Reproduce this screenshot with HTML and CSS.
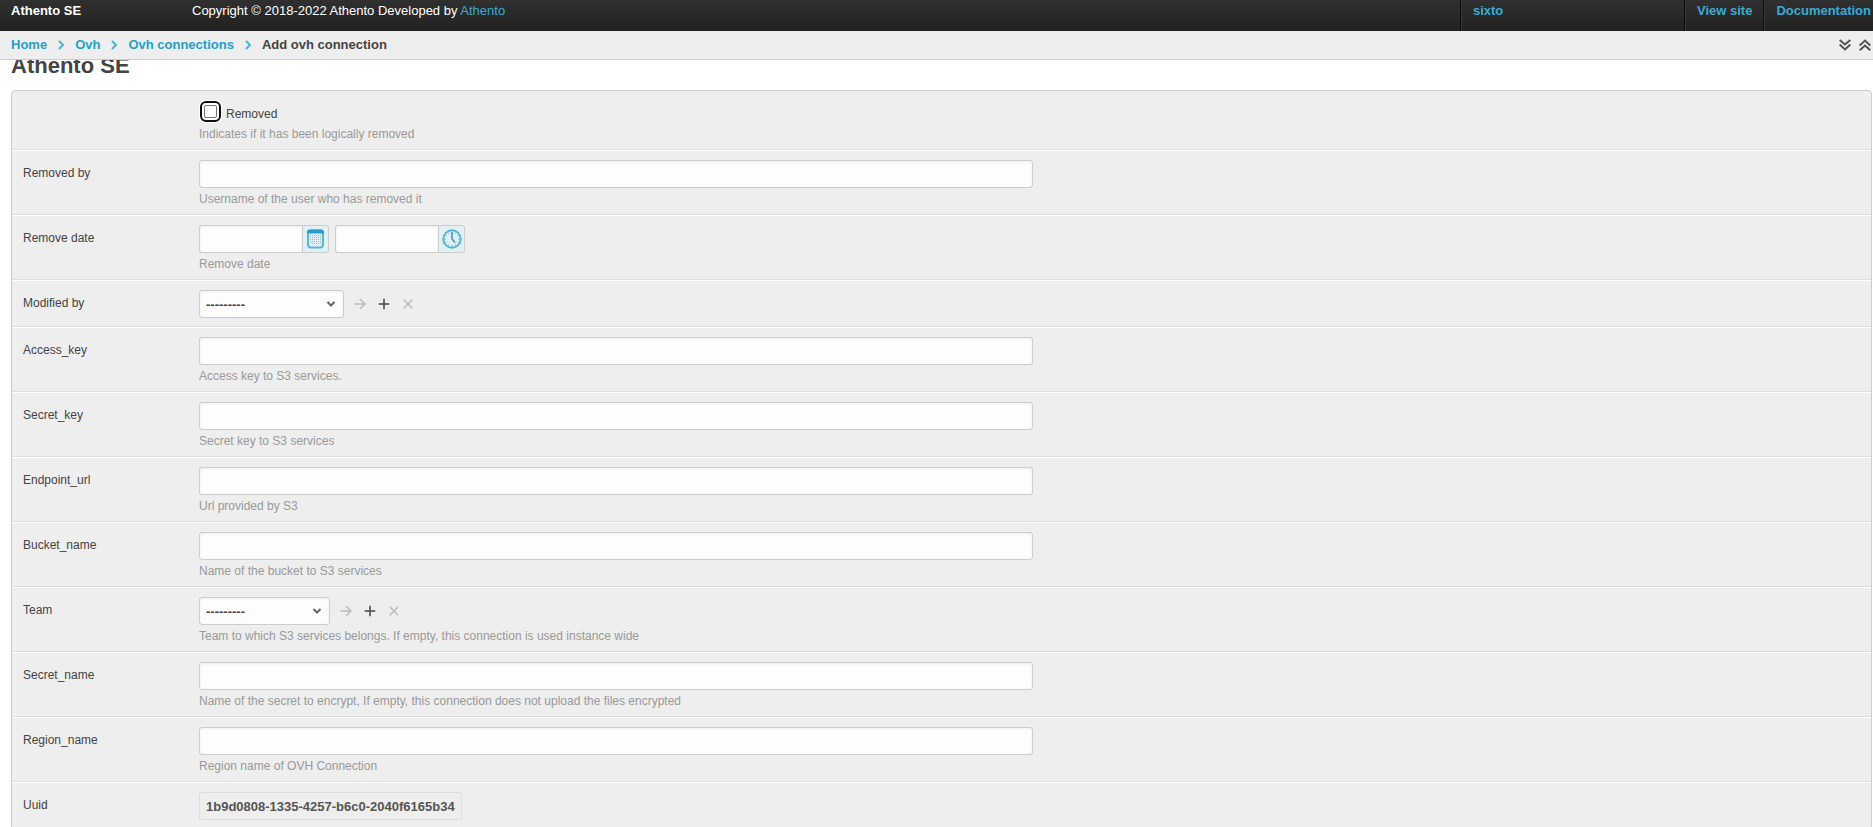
FILE: index.html
```html
<!DOCTYPE html>
<html lang="en">
<head>
<meta charset="utf-8">
<title>Add ovh connection | Athento SE</title>
<link rel="stylesheet" href="styles.css">
</head>
<body>

<header id="grp-header">
	<div class="navigation">
		<h1 class="branding">Athento SE</h1>
		<p class="copyright">Copyright © 2018-2022 Athento Developed by <a href="#">Athento</a></p>
		<ul class="user-tools">
			<li class="user"><a href="#">sixto</a></li>
			<li><a href="#">View site</a></li>
			<li><a href="#">Documentation</a></li>
		</ul>
	</div>
	<div class="context">
		<ul class="breadcrumbs">
			<li><a href="#">Home</a><svg class="sep" viewBox="0 0 8 12"><path d="M2 2l4 4-4 4"/></svg></li>
			<li><a href="#">Ovh</a><svg class="sep" viewBox="0 0 8 12"><path d="M2 2l4 4-4 4"/></svg></li>
			<li><a href="#">Ovh connections</a><svg class="sep" viewBox="0 0 8 12"><path d="M2 2l4 4-4 4"/></svg></li>
			<li>Add ovh connection</li>
		</ul>
		<div class="page-tools">
			<button type="button" aria-label="Open all"><svg viewBox="0 0 12 12"><path d="M.7 1 6 5.500 11.300 1M.7 5.500 6 10.500 11.300 5.500"/></svg></button>
			<button type="button" aria-label="Close all"><svg viewBox="0 0 12 12"><path d="M.7 6.500 6 1.500 11.300 6.500M.7 11.300 6 6.500 11.300 11.300"/></svg></button>
		</div>
	</div>
</header>

<main class="content">
	<h1 class="title">Athento SE</h1>
	<form class="module">

		<div class="row">
			<div class="field check-field">
				<div class="check"><input type="checkbox" id="id_removed"><label for="id_removed">Removed</label></div>
				<p class="help">Indicates if it has been logically removed</p>
			</div>
		</div>

		<div class="row">
			<label for="id_removed_by">Removed by</label>
			<div class="field">
				<input type="text" class="text" id="id_removed_by">
				<p class="help">Username of the user who has removed it</p>
			</div>
		</div>

		<div class="row">
			<label for="id_remove_date">Remove date</label>
			<div class="field">
				<div class="datetime">
					<div class="picker">
						<input type="text" class="text" id="id_remove_date">
						<button type="button" aria-label="Calendar">
							<svg viewBox="0 0 20 20">
								<rect class="face" x="2" y="1.500" width="15" height="17" rx="3"/>
								<path class="bar" d="M1 4.500V3.500A3 3 0 0 1 4 .5h11a3 3 0 0 1 3 3v1z"/>
								<path class="dots" d="M4 6.500h11M4 8.500h11M4 10.500h11M4 12.500h11M4 14.500h11"/>
							</svg>
						</button>
					</div>
					<div class="picker">
						<input type="text" class="text" id="id_remove_time" aria-label="Remove time">
						<button type="button" aria-label="Clock">
							<svg viewBox="0 0 20 20">
								<circle class="face" cx="10" cy="10" r="8.700"/>
								<path class="ticks" d="M10 2.500v1.500M10 16v1.500M2.500 10H4M16 10h1.500M6.200 3.500l.7 1.200M13.800 3.500l-.7 1.200M3.500 6.200l1.200.7M16.500 6.200l-1.200.7M3.500 13.800l1.200-.7M16.500 13.800l-1.200-.7M6.200 16.500l.7-1.200M13.800 16.500l-.7-1.200"/>
								<path class="hands" d="M10 3V10l3 3.500"/>
							</svg>
						</button>
					</div>
				</div>
				<p class="help">Remove date</p>
			</div>
		</div>

		<div class="row">
			<label for="id_modified_by">Modified by</label>
			<div class="field">
				<div class="related">
					<div class="select wide">
						<select id="id_modified_by"><option>---------</option></select>
						<svg viewBox="0 0 10 8"><path d="M1.500 2 5 5.500 8.500 2"/></svg>
					</div>
					<div class="related-tools">
						<button type="button" class="off" aria-label="Change"><svg viewBox="0 0 12 12"><path d="M.5 6H11M6 1l5 5-5 5"/></svg></button>
						<button type="button" class="add" aria-label="Add"><svg viewBox="0 0 12 12"><path d="M6 .7v10.600M.7 6h10.600"/></svg></button>
						<button type="button" class="off" aria-label="Remove"><svg viewBox="0 0 12 12"><path d="M1.800 1.800l8.400 8.400M10.200 1.800l-8.400 8.400"/></svg></button>
					</div>
				</div>
			</div>
		</div>

		<div class="row">
			<label for="id_access_key">Access_key</label>
			<div class="field">
				<input type="text" class="text" id="id_access_key">
				<p class="help">Access key to S3 services.</p>
			</div>
		</div>

		<div class="row">
			<label for="id_secret_key">Secret_key</label>
			<div class="field">
				<input type="text" class="text" id="id_secret_key">
				<p class="help">Secret key to S3 services</p>
			</div>
		</div>

		<div class="row">
			<label for="id_endpoint_url">Endpoint_url</label>
			<div class="field">
				<input type="text" class="text" id="id_endpoint_url">
				<p class="help">Url provided by S3</p>
			</div>
		</div>

		<div class="row">
			<label for="id_bucket_name">Bucket_name</label>
			<div class="field">
				<input type="text" class="text" id="id_bucket_name">
				<p class="help">Name of the bucket to S3 services</p>
			</div>
		</div>

		<div class="row">
			<label for="id_team">Team</label>
			<div class="field">
				<div class="related">
					<div class="select">
						<select id="id_team"><option>---------</option></select>
						<svg viewBox="0 0 10 8"><path d="M1.500 2 5 5.500 8.500 2"/></svg>
					</div>
					<div class="related-tools">
						<button type="button" class="off" aria-label="Change"><svg viewBox="0 0 12 12"><path d="M.5 6H11M6 1l5 5-5 5"/></svg></button>
						<button type="button" class="add" aria-label="Add"><svg viewBox="0 0 12 12"><path d="M6 .7v10.600M.7 6h10.600"/></svg></button>
						<button type="button" class="off" aria-label="Remove"><svg viewBox="0 0 12 12"><path d="M1.800 1.800l8.400 8.400M10.200 1.800l-8.400 8.400"/></svg></button>
					</div>
				</div>
				<p class="help">Team to which S3 services belongs. If empty, this connection is used instance wide</p>
			</div>
		</div>

		<div class="row">
			<label for="id_secret_name">Secret_name</label>
			<div class="field">
				<input type="text" class="text" id="id_secret_name">
				<p class="help">Name of the secret to encrypt, If empty, this connection does not upload the files encrypted</p>
			</div>
		</div>

		<div class="row">
			<label for="id_region_name">Region_name</label>
			<div class="field">
				<input type="text" class="text" id="id_region_name">
				<p class="help">Region name of OVH Connection</p>
			</div>
		</div>

		<div class="row">
			<label for="id_uuid">Uuid</label>
			<div class="field">
				<output class="readonly" id="id_uuid">1b9d0808-1335-4257-b6c0-2040f6165b34</output>
			</div>
		</div>

	</form>
</main>

</body>
</html>
```
FILE: styles.css
```css
* {
	box-sizing: border-box;
	margin: 0;
	padding: 0;
}
body {
	background: #fff;
	color: #444;
	font: 12px/16px "Liberation Sans", Arial, sans-serif;
}
a {
	color: #24a0c8;
	text-decoration: none;
}
ul {
	list-style: none;
}
button {
	background: none;
	border: 0;
	cursor: pointer;
}
svg {
	display: block;
	fill: none;
	stroke: currentColor;
}

/* header */
#grp-header {
	position: fixed;
	top: 0;
	left: 0;
	right: 0;
	z-index: 10;
}
.navigation {
	display: flex;
	height: 31px;
	background: linear-gradient(#303030, #212121);
	color: #fff;
	font-size: 13px;
	line-height: 21px;
}
.navigation a {
	color: #3aabd2;
}
.branding {
	width: 192px;
	padding-left: 11px;
	font-size: 13px;
}
.copyright {
	flex: 1;
}
.user-tools {
	display: flex;
	font-weight: bold;
}
.user-tools li {
	padding: 0 11px 0 12px;
	border-left: 1px solid #0a0a0a;
	box-shadow: inset 1px 0 0 #383838;
}
.user-tools li:last-child {
	padding-right: 2px;
}
.user-tools .user {
	width: 224px;
}
.context {
	display: flex;
	justify-content: space-between;
	align-items: center;
	height: 29px;
	padding: 0 2px 0 11px;
	background: #eee;
	border-bottom: 1px solid #ccc;
	font-size: 13px;
	font-weight: bold;
}
.breadcrumbs,
.breadcrumbs li {
	display: flex;
	align-items: center;
}
.sep {
	width: 8px;
	height: 12px;
	margin: 0 10px;
	color: #4fb2d3;
	stroke-width: 2;
}
.page-tools {
	display: flex;
	gap: 8px;
}
.page-tools svg {
	width: 12px;
	height: 12px;
	color: #555;
	stroke-width: 2;
}

/* form */
.content {
	padding: 54px 1px 20px 11px;
}
.title {
	margin-bottom: 12px;
	font-size: 22px;
	line-height: 24px;
}
.module {
	background: #eee;
	border: 1px solid #ccc;
	border-radius: 4px;
}
.row {
	display: flex;
	padding: 9px 5px 7px 11px;
	border-top: 1px solid #fff;
	border-bottom: 1px solid #ddd;
}
.row:first-child {
	border-top: 0;
}
.row > label {
	width: 176px;
	padding-top: 5px;
}
.field {
	flex: 1;
	padding-bottom: 1px;
}
.check-field {
	margin-left: 176px;
}
.check {
	display: flex;
	gap: 9px;
	padding-top: 5px;
	line-height: 18px;
}
.check input {
	width: 13px;
	height: 13px;
	margin-left: 5px;
	appearance: none;
	background: #fff;
	border: 1px solid #767676;
	border-radius: 2px;
	outline: 2px solid #101010;
	outline-offset: 2px;
	box-shadow: 0 0 0 5px #fff;
}
.check input:checked {
	background: #24a0c8;
}
.help {
	margin-top: 5px;
	color: #999;
	line-height: 13px;
}
.text,
.select select {
	display: block;
	height: 28px;
	padding: 0 6px;
	background: #fdfdfd;
	border: 1px solid #ccc;
	border-radius: 3px;
	box-shadow: inset 0 1px 3px #eee;
	color: #444;
	font: bold 13px "Liberation Sans", Arial, sans-serif;
}
.text {
	width: 50%;
}
.datetime,
.picker,
.related,
.related-tools {
	display: flex;
}
.datetime {
	gap: 6px;
}
.picker .text {
	width: 103px;
	border-right: 0;
	border-radius: 3px 0 0 3px;
}
.picker button {
	display: grid;
	place-items: center;
	width: 27px;
	height: 28px;
	background: #e1f0f5;
	border: 1px solid #ccc;
	border-radius: 0 3px 3px 0;
}
.picker svg {
	width: 20px;
	height: 20px;
	color: #309bbf;
}
.picker .face {
	stroke: #59b6d0;
	stroke-width: 2;
}
.picker .bar {
	fill: #24a0c8;
	stroke: none;
}
.picker .dots {
	stroke: #7cc1d6;
	stroke-dasharray: 1 1;
}
.picker .ticks {
	stroke: #59b6d0;
}
.picker .hands {
	stroke-width: 1.5;
}
.related {
	align-items: center;
	gap: 10px;
}
.related-tools {
	gap: 12px;
}
.select {
	display: grid;
	align-items: center;
	width: 131px;
}
.select.wide {
	width: 145px;
}
.select select,
.select svg {
	grid-area: 1 / 1;
}
.select select {
	width: 100%;
	appearance: none;
}
.select svg {
	justify-self: end;
	width: 10px;
	height: 8px;
	margin-right: 8px;
	color: #666;
	stroke-width: 2;
	pointer-events: none;
}
.related button svg {
	width: 12px;
	height: 12px;
	stroke-width: 1.5;
}
.related .off {
	color: #bbb;
}
.related .add {
	color: #444;
}
.readonly {
	display: block;
	width: fit-content;
	height: 28px;
	padding: 0 6px;
	border: 1px dotted #ccc;
	border-radius: 3px;
	color: #555;
	font-size: 13px;
	font-weight: bold;
	line-height: 27px;
}
```
